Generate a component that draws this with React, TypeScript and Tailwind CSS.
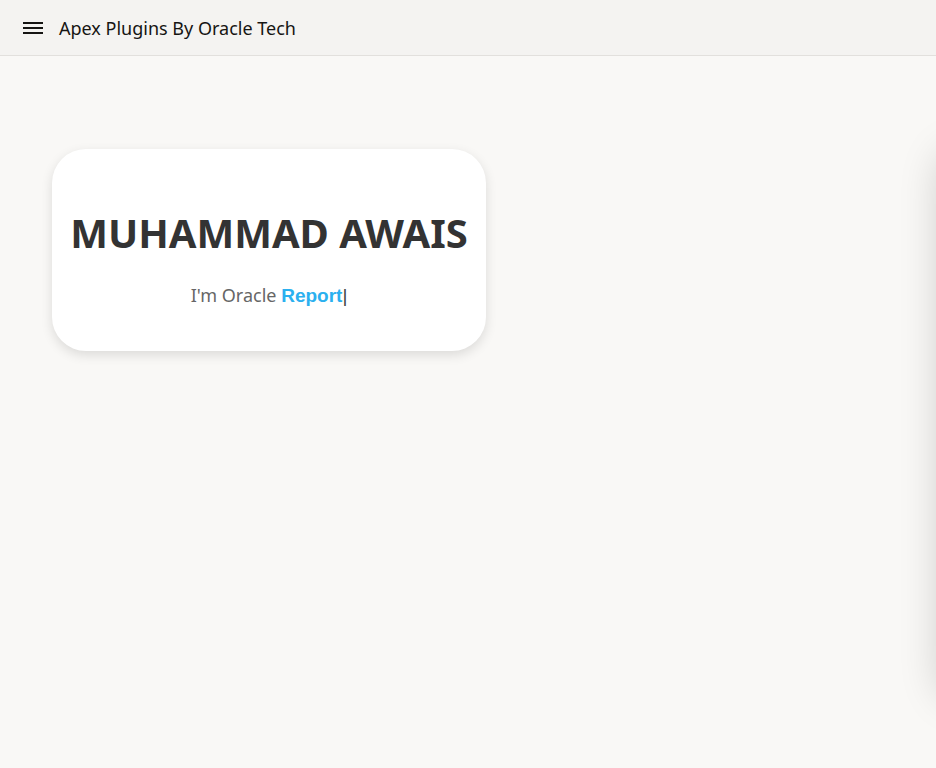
import React from "react";

const Menu: React.FC = () => (
  <svg width="20" height="14" viewBox="0 0 20 14" className="text-[#161513]">
    <rect x="0" y="1" width="20" height="2" fill="currentColor" />
    <rect x="0" y="6" width="20" height="2" fill="currentColor" />
    <rect x="0" y="11" width="20" height="2" fill="currentColor" />
  </svg>
);

const App: React.FC = () => {
  return (
    <div className="relative h-[768px] w-[936px] overflow-hidden bg-[#f9f8f6] font-['Noto_Sans','Open_Sans',sans-serif]">
      <header className="flex h-[56px] items-center border-b border-[#e2e0dd] bg-[#f4f3f1] pl-[23px]">
        <button className="flex h-[14px] items-center">
          <Menu />
        </button>
        <span className="ml-[16px] mt-[2px] text-[18px] text-[#161513]">Apex Plugins By Oracle Tech</span>
      </header>

      <main className="px-[52px] pt-[93px]">
        <div className="flex h-[202px] w-[434px] flex-col items-center rounded-[34px] bg-white pt-[64px] shadow-[0_4px_12px_rgba(0,0,0,0.12)]">
          <h1 className="text-[40px] font-bold leading-none text-[#333333]">MUHAMMAD AWAIS</h1>
          <p className="mt-[33px] text-[18px] leading-none text-[#666666]">
            I'm Oracle{" "}
            <span className="font-['Liberation_Sans',Arial,sans-serif] text-[19px] font-bold text-[#2bb0ef]">Report</span>
            <span className="font-['Liberation_Sans',Arial,sans-serif] text-[19px] text-[#444]">|</span>
          </p>
        </div>
      </main>

      <div className="absolute left-[940px] top-[140px] h-[550px] w-[400px] rounded-[24px] bg-white shadow-[0_10px_40px_rgba(0,0,0,0.18)]" />
    </div>
  );
};

export default App;
